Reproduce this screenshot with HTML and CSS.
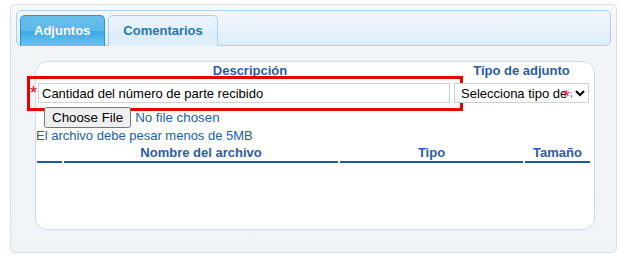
FILE: index.html
```html
<!DOCTYPE html>
<html lang="es">
<head>
    <meta charset="UTF-8">
    <meta name="viewport" content="width=device-width, initial-scale=1.0">
    <title>Adjuntos</title>
    <link rel="stylesheet" href="styles.css">
</head>
<body>
    <div class="tabs">
        <ul class="tab-nav">
            <li class="tab tab-active">Adjuntos</li>
            <li class="tab">Comentarios</li>
        </ul>

        <div class="panel">
            <div class="label-row">
                <div class="label label-desc">Descripción</div>
                <div class="label label-type">Tipo de adjunto</div>
            </div>

            <div class="field-row">
                <div class="desc-field">
                    <span class="required">*</span>
                    <input type="text" class="input-box" value="Cantidad del número de parte recibido">
                </div>
                <div class="select-wrap">
                    <select class="select-box">
                        <option>Selecciona tipo de adjunto</option>
                    </select>
                    <span class="required required-select">*</span>
                </div>
            </div>

            <div class="file-row">
                <input type="file" class="file-input">
            </div>
            <div class="hint">El archivo debe pesar menos de 5MB</div>

            <table class="files">
                <thead>
                    <tr>
                        <th class="col-check"></th>
                        <th class="col-name">Nombre del archivo</th>
                        <th class="col-type">Tipo</th>
                        <th class="col-size">Tamaño</th>
                    </tr>
                </thead>
                <tbody></tbody>
            </table>
        </div>
    </div>
</body>
</html>
```

FILE: styles.css
```css
body {
    margin: 0;
    font-family: "Liberation Sans", Arial, sans-serif;
    font-size: 13px;
    color: #2160a8;
    background-color: #fff;
}
.tabs {
    margin: 4px 10px 0 10px;
    padding: 5px 5px 22px 5px;
    border: 1px solid #dddddd;
    border-radius: 5px;
    background: linear-gradient(to bottom, #f7f9fb 0, #f2f5f7 40px, #f0f4f7 100%);
}
.tab-nav {
    display: flex;
    gap: 3px;
    list-style: none;
    margin: 0;
    padding: 4px 3px 0 3px;
    height: 30px;
    border: 1px solid #aed0ea;
    border-radius: 5px;
    background: linear-gradient(to bottom, #f2f7fc 0, #e9f2fa 50%, #deedf7 100%);
}
.tab {
    height: 15px;
    padding: 7px 14px 8px 14px;
    margin-bottom: -1px;
    border: 1px solid #aed0ea;
    border-bottom: none;
    border-radius: 5px 5px 0 0;
    font-weight: bold;
    line-height: 15px;
    color: #2779aa;
    background: linear-gradient(to bottom, #eaf4fc 0, #e4f1fb 50%, #d9ecf9 52%, #e3f1fb 100%);
    cursor: pointer;
}
.tab-active {
    padding: 7px 14px 8px 13px;
    border-color: #2694e8;
    color: #fff;
    background: linear-gradient(to bottom, #66bdeb 0, #5db8e9 50%, #3ba9e3 52%, #6cc3ee 100%);
}
.panel {
    margin: 15px 16px 0 19px;
    height: 167px;
    border: 1px solid #c9ddf3;
    border-radius: 12px;
    background-color: #fff;
}
.label-row {
    display: flex;
    padding-top: 1px;
}
.label {
    font-weight: bold;
    line-height: 15px;
    text-align: center;
    color: #2a5da5;
}
.label-desc {
    width: 428px;
}
.label-type {
    width: 115px;
}
.field-row {
    display: flex;
    margin-top: 5px;
}
.desc-field {
    display: flex;
    margin: -4px 0 -5px -6px;
    padding: 4px 10px 5px 0;
    outline: 3px solid #e60000;
}
.required {
    width: 8px;
    font-size: 18px;
    line-height: 20px;
    color: #e60000;
}
.input-box {
    box-sizing: border-box;
    width: 412px;
    height: 20px;
    margin: 0;
    padding: 0 3px;
    border: 1px solid #d0d0d0;
    font-family: "Liberation Sans", Arial, sans-serif;
    font-size: 13px;
    color: #000;
}
.select-wrap {
    position: relative;
    margin-left: -6px;
}
.select-box {
    box-sizing: border-box;
    width: 135px;
    height: 20px;
    margin: 0;
    padding: 0 0 0 2px;
    border: 1px solid #d0d0d0;
    border-radius: 0;
    background-color: #fff;
    font-family: "Liberation Sans", Arial, sans-serif;
    font-size: 13px;
    color: #000;
}
.required-select {
    position: absolute;
    left: 109px;
    top: 4px;
    color: #ee2a4c;
}
.file-row {
    margin: 4px 0 0 8px;
    height: 18px;
}
.file-input {
    margin: 0;
    font-family: "Liberation Sans", Arial, sans-serif;
    font-size: 13.33px;
    color: #2160a8;
}
.hint {
    margin-top: 3px;
    line-height: 15px;
}
.files {
    margin-left: -1px;
    border-spacing: 2px;
}
.files th {
    padding: 0 0 1px 0;
    border-bottom: 2px solid #1a5c9f;
    font-weight: bold;
    line-height: 15px;
    color: #2a5da5;
}
.col-check {
    width: 25px;
}
.col-name {
    width: 274px;
}
.col-type {
    width: 183px;
}
.col-size {
    width: 65px;
}
```
